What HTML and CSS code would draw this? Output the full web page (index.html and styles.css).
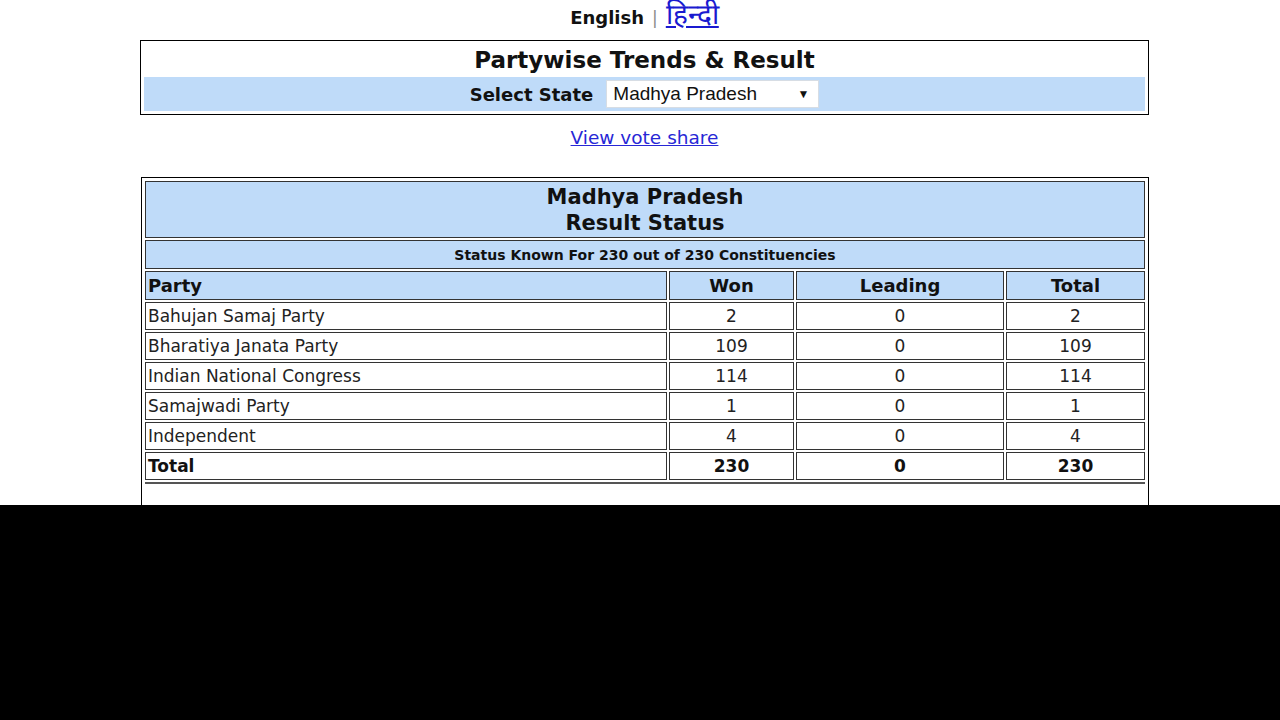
FILE: index.html
```html
<!DOCTYPE html>
<html>
<head>
<meta charset="utf-8">
<link rel="stylesheet" href="styles.css">
</head>
<body>
<div class="page">
  <div class="lang">
    <span class="lang-en">English</span>
    <span class="lang-sep">|</span>
    <a class="lang-hi" href="#">हिन्दी</a>
  </div>

  <div class="selector">
    <div class="selector-title">Partywise Trends &amp; Result</div>
    <div class="selector-band">
      <span class="selector-label">Select State</span>
      <div class="select">
        <span class="select-value">Madhya Pradesh</span>
        <span class="select-arrow">▼</span>
      </div>
    </div>
  </div>

  <div class="vote-link"><a href="#">View vote share</a></div>

  <div class="result-box">
    <table class="result">
      <colgroup>
        <col class="c-party">
        <col class="c-won">
        <col class="c-lead">
        <col class="c-total">
      </colgroup>
      <tr>
        <th colspan="4" class="cap">Madhya Pradesh<br>Result Status</th>
      </tr>
      <tr>
        <th colspan="4" class="status">Status Known For 230 out of 230 Constituencies</th>
      </tr>
      <tr class="head">
        <th class="left">Party</th>
        <th>Won</th>
        <th>Leading</th>
        <th>Total</th>
      </tr>
      <tr class="row">
        <td class="name">Bahujan Samaj Party</td><td>2</td><td>0</td><td>2</td>
      </tr>
      <tr class="row">
        <td class="name">Bharatiya Janata Party</td><td>109</td><td>0</td><td>109</td>
      </tr>
      <tr class="row">
        <td class="name">Indian National Congress</td><td>114</td><td>0</td><td>114</td>
      </tr>
      <tr class="row">
        <td class="name">Samajwadi Party</td><td>1</td><td>0</td><td>1</td>
      </tr>
      <tr class="row">
        <td class="name">Independent</td><td>4</td><td>0</td><td>4</td>
      </tr>
      <tr class="row total">
        <td class="name">Total</td><td>230</td><td>0</td><td>230</td>
      </tr>
      <tr class="endline">
        <td colspan="4"></td>
      </tr>
    </table>
    <div class="result-space"></div>
  </div>
</div>
<div class="blackout"></div>
</body>
</html>
```

FILE: styles.css
```css
html, body {
  margin: 0;
  padding: 0;
  background: #ffffff;
}

body {
  font-family: "DejaVu Sans", Verdana, sans-serif;
  color: #111;
  overflow: hidden;
  height: 720px;
}

.page {
  width: 1009px;
  margin-left: 140px;
}

.lang {
  height: 34px;
  display: flex;
  justify-content: center;
  align-items: baseline;
  gap: 8px;
  box-sizing: border-box;
  padding-top: 1px;
  line-height: 1;
}

.lang-en {
  font-weight: bold;
  font-size: 18px;
  color: #111;
}

.lang-sep {
  color: #8a8a8a;
  font-size: 17px;
}

.lang-hi {
  color: #1a1ad0;
  font-size: 28px;
  text-decoration: underline;
}

.selector {
  margin-top: 6px;
  border: 1px solid #000;
  padding: 3px;
}

.selector-title {
  height: 30px;
  margin-bottom: 3px;
  text-align: center;
  font-weight: bold;
  font-size: 23px;
  line-height: 32px;
}

.selector-band {
  height: 34px;
  background: #bfdbf9;
  display: flex;
  justify-content: center;
  align-items: center;
  gap: 13px;
}

.selector-label {
  font-weight: bold;
  font-size: 18px;
}

.select {
  width: 213px;
  height: 28px;
  box-sizing: border-box;
  background: #fff;
  border: 1px solid #d7dde4;
  display: flex;
  align-items: center;
  justify-content: space-between;
  padding: 0 9px 0 6px;
  font-family: "Liberation Sans", Arial, sans-serif;
  font-size: 19px;
  color: #111;
}

.select-arrow {
  font-size: 12px;
}

.vote-link {
  text-align: center;
  height: 62px;
  line-height: 46px;
}

.vote-link a {
  color: #2727d6;
  font-size: 18.5px;
  text-decoration: underline;
}

.result-box {
  margin-left: 1px;
  width: 1008px;
  box-sizing: border-box;
  border: 1px solid #000;
  padding: 1px;
}

.result {
  width: 100%;
  border-collapse: separate;
  border-spacing: 2px;
  table-layout: fixed;
}

.c-party { width: 522px; }
.c-won { width: 125px; }
.c-lead { width: 208px; }
.c-total { width: 139px; }

.result th,
.result td {
  border: 1px solid #333;
  padding: 0 2px;
}

.result th {
  background: #bfdbf9;
}

.cap {
  font-size: 21px;
  line-height: 26px;
  height: 55px;
  text-align: center;
  padding-top: 1px;
}

.status {
  font-size: 14px;
  height: 27px;
  text-align: center;
}

.head th {
  font-size: 18px;
  height: 27px;
  text-align: center;
}

.head th.left {
  text-align: left;
}

.row td {
  height: 26px;
  font-size: 17px;
  text-align: center;
  color: #222;
}

.row td.name {
  text-align: left;
}

.row.total td {
  font-weight: bold;
  color: #111;
}

.endline td {
  height: 0;
  padding: 0;
  border-width: 1px 0 1px 0;
  border-color: #555;
}

.result-space {
  height: 60px;
}

.blackout {
  position: fixed;
  left: 0;
  right: 0;
  bottom: 0;
  height: 215px;
  background: #000;
}
```
